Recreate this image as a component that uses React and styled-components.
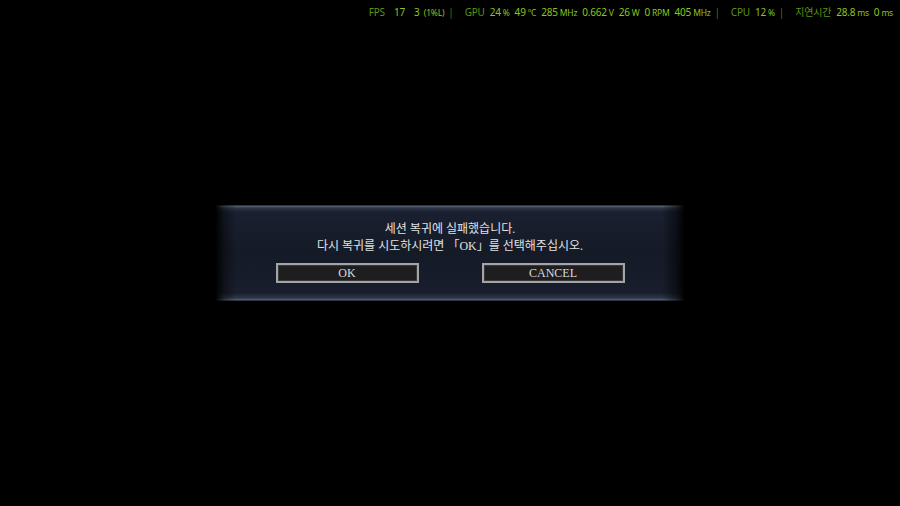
import React from 'react'
import styled, { createGlobalStyle } from 'styled-components'

const GlobalStyle = createGlobalStyle`
  html, body {
    margin: 0;
    padding: 0;
    background: #000;
  }
  * {
    box-sizing: border-box;
  }
`

const Screen = styled.main`
  position: relative;
  width: 100%;
  height: 506px;
  background: #000;
  display: flex;
  align-items: center;
  justify-content: center;
  overflow: hidden;
`

const Hud = styled.div`
  position: absolute;
  top: 5px;
  right: 7px;
  display: flex;
  align-items: baseline;
  gap: 5px;
  font-family: 'Noto Sans', 'Noto Sans CJK KR', sans-serif;
  font-size: 10px;
  line-height: 14px;
  letter-spacing: -0.2px;
  white-space: nowrap;
`

const Label = styled.span`
  color: #5e9410;
  margin-right: ${p => p.$gap || 0}px;
`

const Value = styled.span`
  color: #8fc41c;
  margin-right: ${p => p.$gap || 0}px;
`

const Unit = styled.span`
  font-size: 8.5px;
  margin-left: 2px;
`

const Sep = styled.span`
  color: #4a7410;
  margin: 0 6px 0 -1px;
`

const Dialog = styled.section`
  width: 468px;
  height: 96px;
  display: flex;
  flex-direction: column;
  align-items: center;
  padding-top: 16px;
  background:
    linear-gradient(90deg, rgba(0,0,0,0.95) 0px, rgba(0,0,0,0.4) 8px, rgba(0,0,0,0) 20px, rgba(0,0,0,0) calc(100% - 22px), rgba(0,0,0,0.5) calc(100% - 8px), rgba(0,0,0,0.95) 100%),
    linear-gradient(180deg, #080a10 0px, #5a6476 1px, #2e3648 3px, #1a2030 7px, #151a27 50%, #181e2c 88px, #2e3648 93px, #586274 95px, #080a10 96px);
  font-family: 'Liberation Serif', 'Noto Sans CJK KR', serif;
  color: #e2e2e2;
`

const Message = styled.p`
  margin: 0;
  font-size: 12px;
  line-height: 17px;
  text-align: center;
`

const Buttons = styled.div`
  display: flex;
  gap: 63px;
  margin-top: 8px;
`

const Button = styled.button`
  width: 143px;
  height: 20px;
  padding: 0;
  background: #1e1e20;
  border: 2px solid #a4a4a6;
  box-shadow: inset 0 0 0 1px #38383a;
  color: #dcdcdc;
  font-family: 'Liberation Serif', serif;
  font-size: 12px;
  font-weight: 400;
  line-height: 16px;
  cursor: pointer;
`

export default function App() {
  return (
    <>
      <GlobalStyle />
      <Screen>
        <Hud>
          <Label $gap={4}>FPS</Label>
          <Value $gap={4}>17</Value>
          <Value>3 <Unit>(1%L)</Unit></Value>
          <Sep>|</Sep>
          <Label>GPU</Label>
          <Value>24<Unit>%</Unit></Value>
          <Value>49<Unit>°C</Unit></Value>
          <Value>285<Unit>MHz</Unit></Value>
          <Value>0.662<Unit>V</Unit></Value>
          <Value>26<Unit>W</Unit></Value>
          <Value>0<Unit>RPM</Unit></Value>
          <Value>405<Unit>MHz</Unit></Value>
          <Sep>|</Sep>
          <Label>CPU</Label>
          <Value>12<Unit>%</Unit></Value>
          <Sep>|</Sep>
          <Label>지연시간</Label>
          <Value>28.8<Unit>ms</Unit></Value>
          <Value>0<Unit>ms</Unit></Value>
        </Hud>
        <Dialog>
          <Message>세션 복귀에 실패했습니다.</Message>
          <Message>다시 복귀를 시도하시려면 「OK」를 선택해주십시오.</Message>
          <Buttons>
            <Button>OK</Button>
            <Button>CANCEL</Button>
          </Buttons>
        </Dialog>
      </Screen>
    </>
  )
}
